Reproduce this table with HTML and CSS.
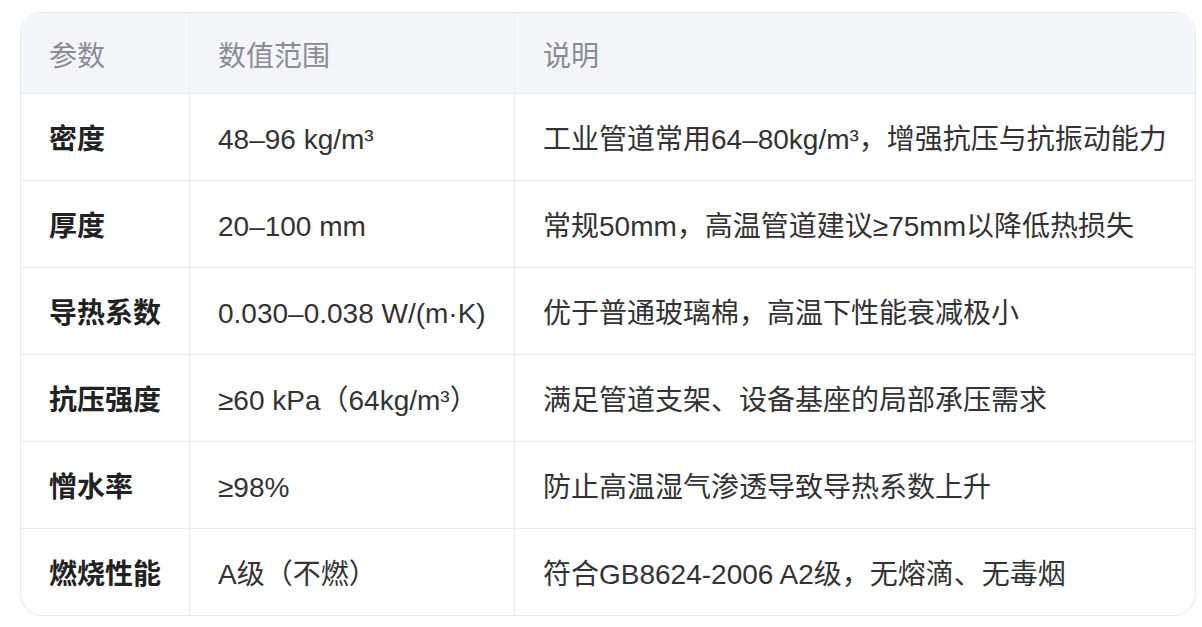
FILE: index.html
```html
<!DOCTYPE html>
<html lang="zh-CN">
<head>
<meta charset="utf-8">
<title>参数表</title>
<link rel="stylesheet" href="styles.css">
</head>
<body>
<div class="table-wrap">
  <table class="spec-table">
    <colgroup>
      <col class="col-param">
      <col class="col-range">
      <col class="col-desc">
    </colgroup>
    <thead>
      <tr>
        <th>参数</th>
        <th>数值范围</th>
        <th>说明</th>
      </tr>
    </thead>
    <tbody>
      <tr>
        <td class="name">密度</td>
        <td>48–96 kg/m³</td>
        <td>工业管道常用64–80kg/m³，增强抗压与抗振动能力</td>
      </tr>
      <tr>
        <td class="name">厚度</td>
        <td>20–100 mm</td>
        <td>常规50mm，高温管道建议≥75mm以降低热损失</td>
      </tr>
      <tr>
        <td class="name">导热系数</td>
        <td>0.030–0.038 W/(m·K)</td>
        <td>优于普通玻璃棉，高温下性能衰减极小</td>
      </tr>
      <tr>
        <td class="name">抗压强度</td>
        <td>≥60 kPa（64kg/m³）</td>
        <td>满足管道支架、设备基座的局部承压需求</td>
      </tr>
      <tr>
        <td class="name">憎水率</td>
        <td>≥98%</td>
        <td>防止高温湿气渗透导致导热系数上升</td>
      </tr>
      <tr>
        <td class="name">燃烧性能</td>
        <td>A级（不燃）</td>
        <td>符合GB8624-2006 A2级，无熔滴、无毒烟</td>
      </tr>
    </tbody>
  </table>
</div>
</body>
</html>
```

FILE: styles.css
```css
html, body {
  margin: 0;
  padding: 0;
  background: #ffffff;
}

body {
  padding: 12px 0 0 20px;
  font-family: "Liberation Sans", Arial, "Noto Sans CJK SC", sans-serif;
  color: #333333;
}

.table-wrap {
  width: 1176px;
  box-sizing: border-box;
  border: 1px solid #e8e9ed;
  border-radius: 22px;
  overflow: hidden;
  background: #ffffff;
}

.spec-table {
  width: 100%;
  border-collapse: separate;
  border-spacing: 0;
  table-layout: fixed;
  font-size: 28px;
}

.col-param { width: 169px; }
.col-range { width: 325px; }

.spec-table th,
.spec-table td {
  text-align: left;
  vertical-align: middle;
  padding: 25px 0 19px 28px;
  line-height: 42px;
  white-space: nowrap;
  border-right: 1px solid #ececef;
  border-bottom: 1px solid #ececef;
}

.spec-table th:last-child,
.spec-table td:last-child {
  border-right: none;
}

.spec-table tbody tr:last-child td {
  border-bottom: none;
}

.spec-table th {
  padding-top: 23px;
  padding-bottom: 15px;
  background: #f4f5f9;
  color: #8a8c95;
  font-weight: normal;
}

.spec-table td {
  color: #333333;
}

.spec-table td.name {
  font-weight: bold;
  color: #222222;
}
```
